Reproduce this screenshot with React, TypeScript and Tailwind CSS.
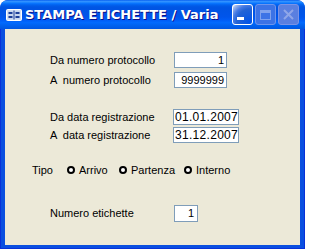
import React from "react";

const TitleIcon = () => (
  <svg width="16" height="12" viewBox="0 0 16 12" className="shrink-0">
    <rect x="0.5" y="0.5" width="15" height="11" rx="1" fill="#DCE6F7" stroke="#FFFFFF" />
    <rect x="1.5" y="1.5" width="13" height="9" fill="#C9D7F0" />
    <line x1="8" y1="1.5" x2="8" y2="10.5" stroke="#1E3F9A" />
    <rect x="2.5" y="3" width="4" height="2" fill="#1E3F9A" />
    <rect x="2.5" y="7" width="4" height="2" fill="#1E3F9A" />
    <rect x="9.5" y="3" width="4" height="2" fill="#1E3F9A" />
    <rect x="9.5" y="7" width="4" height="2" fill="#1E3F9A" />
  </svg>
);

const TitleBar = () => (
  <div className="h-[29px] shrink-0 flex items-center pl-[6px] pr-[6px] rounded-t-[7px] bg-[linear-gradient(180deg,#0058EE_0%,#3593FF_4%,#288EFF_7%,#127DFF_10%,#036FFC_13%,#0262EE_17%,#0057E5_23%,#0054E3_28%,#0055EB_58%,#005BF5_68%,#026AFE_78%,#0062EF_88%,#0056E2_100%)]">
    <TitleIcon />
    <span className="ml-[3px] text-white text-[13px] font-bold leading-none font-['DejaVu_Sans',sans-serif] [text-shadow:1px_1px_0_#0F1089] whitespace-nowrap">
      STAMPA ETICHETTE / Varia
    </span>
    <div className="ml-auto flex gap-[2px]">
      {/* minimize */}
      <div className="w-[21px] h-[21px] rounded-[3px] border border-white bg-[radial-gradient(circle_at_90%_90%,#0054E9_0%,#2263D5_55%,#4479E4_70%,#A3BBEC_90%,#FFFFFF_100%)] flex items-end justify-start pl-[4px] pb-[4px]">
        <div className="w-[7px] h-[3px] bg-white" />
      </div>
      {/* maximize (disabled) */}
      <div className="w-[21px] h-[21px] rounded-[3px] border border-[#6E95EC] bg-[#3C73E6] flex items-center justify-center">
        <div className="w-[11px] h-[10px] border border-[#7FA2EE] border-t-[3px]" />
      </div>
      {/* close (disabled) */}
      <div className="w-[21px] h-[21px] rounded-[3px] border border-[#7A93E6] bg-[#5A7FE0] flex items-center justify-center">
        <svg width="11" height="11" viewBox="0 0 11 11">
          <path d="M1 1 L10 10 M10 1 L1 10" stroke="#8FA6E8" strokeWidth="2" />
        </svg>
      </div>
    </div>
  </div>
);

const Radio = ({ label, width }: { label: string; width: string }) => (
  <div className={`flex items-center ${width}`}>
    <div className="w-[8px] h-[8px] rounded-full border-2 border-black bg-white shrink-0" />
    <span className="ml-[4px]">{label}</span>
  </div>
);

export default function App() {
  return (
    <div className="w-[305px] h-[249px] flex flex-col bg-[#0A4FE0] rounded-t-[8px] overflow-hidden font-['Liberation_Sans',Arial,sans-serif] text-[11px] text-black">
      <TitleBar />
      <div className="flex-1 flex pl-[4px] pr-[4px] pb-[3px] border-x border-b border-[#0831D9]">
        <div className="flex-1 bg-[#ECE9D8] flex flex-col">
          {/* numero protocollo */}
          <div className="mt-[23px] ml-[45px] flex items-center h-[16px]">
            <span className="w-[124px]">Da numero protocollo</span>
            <div className="w-[53px] h-[16px] bg-white border border-[#7F9DB9] flex items-center justify-end pr-[2px]">1</div>
          </div>
          <div className="mt-[4px] ml-[45px] flex items-center h-[16px]">
            <span className="w-[124px] whitespace-pre">A  numero protocollo</span>
            <div className="w-[53px] h-[16px] bg-white border border-[#7F9DB9] flex items-center justify-end pr-[2px]">9999999</div>
          </div>

          {/* data registrazione */}
          <div className="mt-[21px] ml-[45px] flex items-center h-[16px]">
            <span className="w-[123px]">Da data registrazione</span>
            <div className="w-[66px] h-[16px] bg-white border border-[#7F9DB9] flex items-center pl-[1px] text-[12px] tracking-[0.3px]">01.01.2007</div>
          </div>
          <div className="mt-[2px] ml-[45px] flex items-center h-[16px]">
            <span className="w-[123px] whitespace-pre">A  data registrazione</span>
            <div className="w-[66px] h-[16px] bg-white border border-[#7F9DB9] flex items-center pl-[1px] text-[12px] tracking-[0.3px]">31.12.2007</div>
          </div>

          {/* tipo */}
          <div className="mt-[19px] ml-[27px] flex items-center h-[16px]">
            <span className="w-[35px]">Tipo</span>
            <Radio label="Arrivo" width="w-[52px]" />
            <Radio label="Partenza" width="w-[65px]" />
            <Radio label="Interno" width="w-[60px]" />
          </div>

          {/* numero etichette */}
          <div className="mt-[27px] ml-[45px] flex items-center h-[17px]">
            <span className="w-[124px]">Numero etichette</span>
            <div className="w-[24px] h-[17px] bg-white border border-[#7F9DB9] flex items-center justify-end pr-[3px]">1</div>
          </div>
        </div>
      </div>
    </div>
  );
}
